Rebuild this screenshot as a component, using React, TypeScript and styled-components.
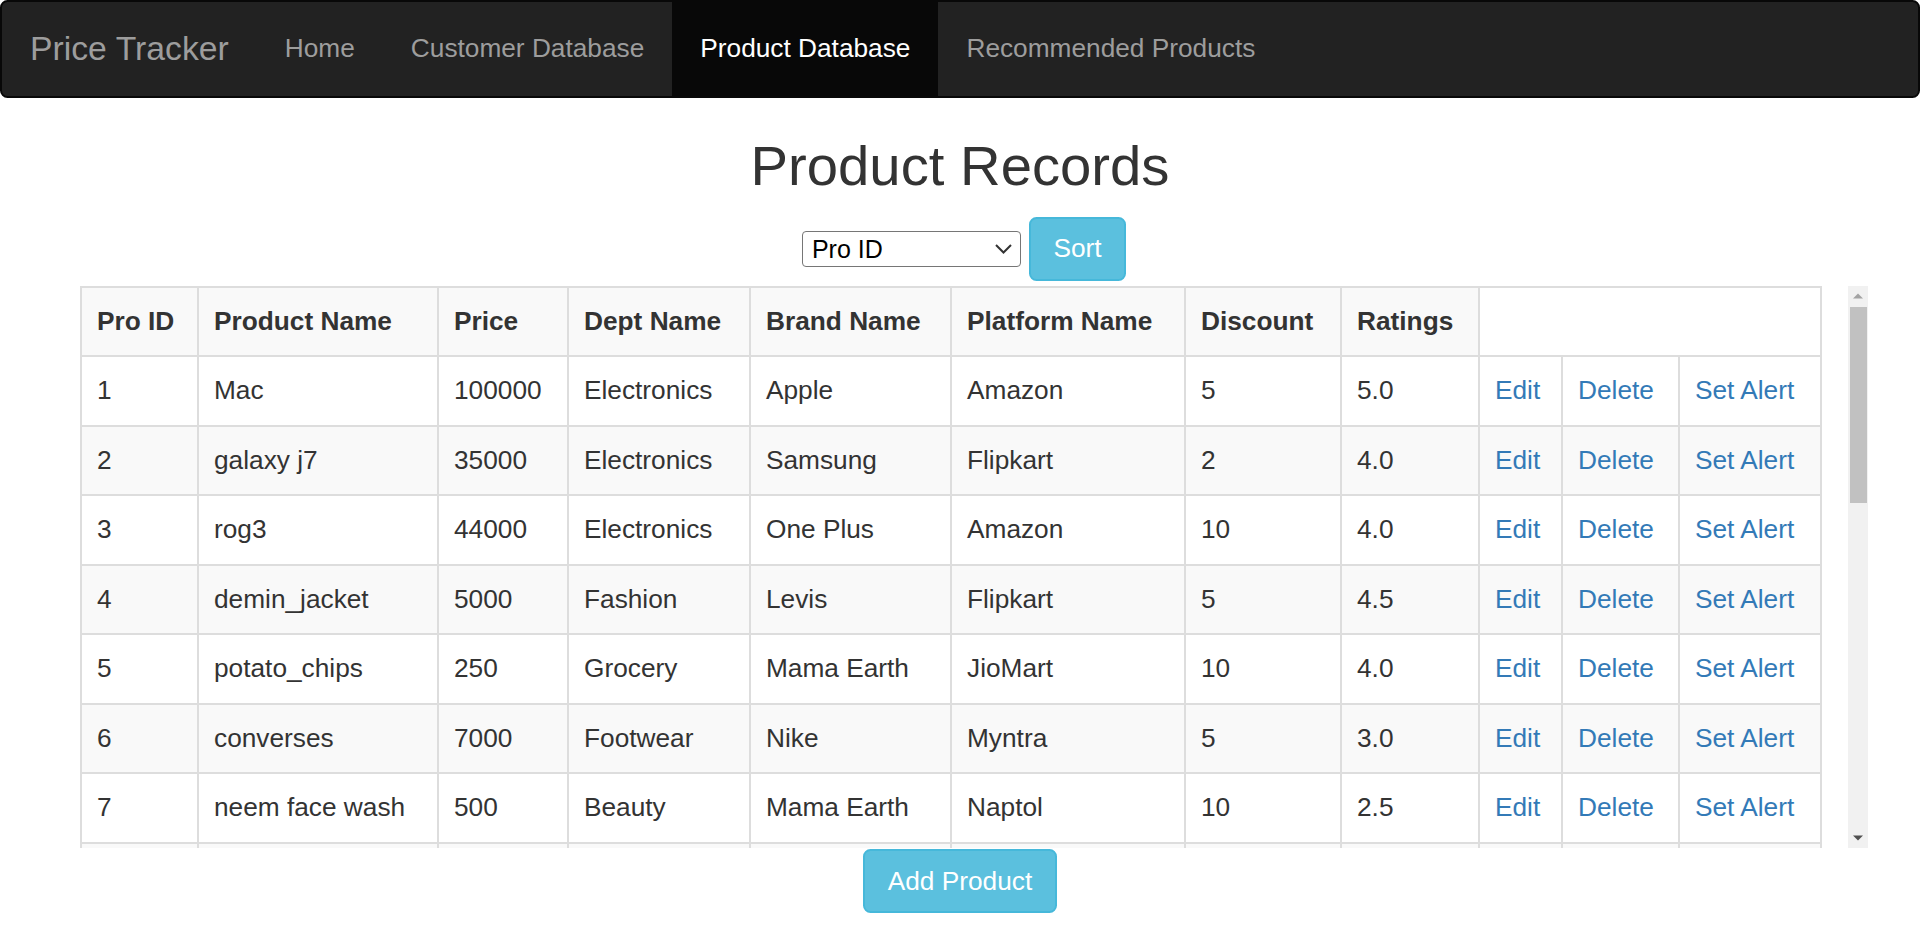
import React from "react";
import styled, { createGlobalStyle } from "styled-components";

const GlobalStyle = createGlobalStyle`
  html, body { margin: 0; padding: 0; background: #fff; }
  body {
    font-family: "Liberation Sans", Arial, Helvetica, sans-serif;
    font-size: 26.25px;
    line-height: 37.5px;
    color: #333;
  }
  *, *::before, *::after { box-sizing: border-box; }
`;

const Navbar = styled.nav`
  display: flex;
  align-items: stretch;
  height: 97.5px;
  background: #222;
  border: 2px solid #080808;
  border-radius: 7.5px;
`;

const Brand = styled.a`
  display: flex;
  align-items: center;
  padding: 0 28px;
  font-size: 33.75px;
  line-height: 37.5px;
  color: #9d9d9d;
  text-decoration: none;
`;

const NavList = styled.ul`
  display: flex;
  margin: 0;
  padding: 0;
  list-style: none;
`;

const NavItem = styled.li`
  display: flex;
`;

const NavLink = styled.a<{ $active?: boolean }>`
  display: flex;
  align-items: center;
  padding: 0 28px;
  font-size: 26.25px;
  color: ${(p) => (p.$active ? "#fff" : "#9d9d9d")};
  background: ${(p) => (p.$active ? "#080808" : "transparent")};
  text-decoration: none;
`;

const Main = styled.main`
  padding: 0 52px;
`;

const Heading = styled.h2`
  margin: 37.5px 0 0;
  font-size: 56.25px;
  font-weight: 500;
  line-height: 61.875px;
  text-align: center;
  color: #333;
`;

const Controls = styled.div`
  display: flex;
  justify-content: center;
  align-items: center;
  gap: 8px;
  margin: 20px 0 5px;
  padding-left: 8px;
`;

const SelectWrap = styled.div`
  position: relative;
  width: 219px;
  height: 36px;
`;

const Select = styled.select`
  appearance: none;
  -webkit-appearance: none;
  width: 100%;
  height: 100%;
  padding: 0 30px 0 9px;
  font-family: "Liberation Sans", Arial, sans-serif;
  font-size: 25px;
  color: #000;
  background: #fff;
  border: 1px solid #767676;
  border-radius: 4px;
`;

const Chevron = styled.svg`
  position: absolute;
  right: 9px;
  top: 13px;
  pointer-events: none;
`;

const Button = styled.button`
  display: inline-block;
  padding: 11.25px 22.5px;
  font-family: "Liberation Sans", Arial, sans-serif;
  font-size: 26.25px;
  line-height: 37.5px;
  color: #fff;
  background: #5bc0de;
  border: 2px solid #46b8da;
  border-radius: 7.5px;
  cursor: pointer;
`;

const ScrollArea = styled.div`
  display: flex;
  height: 562.5px;
`;

const Viewport = styled.div`
  flex: 1;
  min-width: 0;
  overflow-y: auto;
  padding: 0 28px;
  scrollbar-width: none;
  &::-webkit-scrollbar {
    display: none;
  }
`;

const ScrollBar = styled.div`
  display: flex;
  flex-direction: column;
  width: 20px;
  flex: none;
  background: #f1f1f1;
`;

const ScrollButton = styled.div`
  display: flex;
  align-items: center;
  justify-content: center;
  height: 21px;
  flex: none;
`;

const Thumb = styled.div`
  height: 196px;
  margin: 0 1px 0 2px;
  background: #c1c1c1;
  flex: none;
`;

const Spacer = styled.div`
  flex: 1;
`;

const Table = styled.table`
  width: 100%;
  table-layout: fixed;
  border-collapse: collapse;
  border: 2px solid #ddd;
`;

const Row = styled.tr<{ $striped?: boolean }>`
  background: ${(p) => (p.$striped ? "#f9f9f9" : "transparent")};
`;

const HeadCell = styled.th<{ $blank?: boolean }>`
  padding: 15px;
  border: 2px solid #ddd;
  text-align: left;
  vertical-align: bottom;
  font-weight: bold;
  line-height: 37.5px;
  white-space: nowrap;
  background: ${(p) => (p.$blank ? "#fff" : "transparent")};
`;

const Cell = styled.td`
  padding: 15px;
  border: 2px solid #ddd;
  vertical-align: top;
  line-height: 37.5px;
  white-space: nowrap;
  overflow: hidden;
`;

const ActionLink = styled.a`
  color: #337ab7;
  text-decoration: none;
  cursor: pointer;
`;

const Footer = styled.div`
  display: flex;
  justify-content: center;
  margin-top: 1px;
`;

const colWidths = [117, 240, 130, 182, 201, 234, 156, 138, 83, 117, 142];

const headers = [
  "Pro ID",
  "Product Name",
  "Price",
  "Dept Name",
  "Brand Name",
  "Platform Name",
  "Discount",
  "Ratings",
];

type Product = [number, string, number, string, string, string, number, string];

const products: Product[] = [
  [1, "Mac", 100000, "Electronics", "Apple", "Amazon", 5, "5.0"],
  [2, "galaxy j7", 35000, "Electronics", "Samsung", "Flipkart", 2, "4.0"],
  [3, "rog3", 44000, "Electronics", "One Plus", "Amazon", 10, "4.0"],
  [4, "demin_jacket", 5000, "Fashion", "Levis", "Flipkart", 5, "4.5"],
  [5, "potato_chips", 250, "Grocery", "Mama Earth", "JioMart", 10, "4.0"],
  [6, "converses", 7000, "Footwear", "Nike", "Myntra", 5, "3.0"],
  [7, "neem face wash", 500, "Beauty", "Mama Earth", "Naptol", 10, "2.5"],
  [8, "ipad air", 55000, "Electronics", "Apple", "Flipkart", 8, "4.5"],
  [9, "running shoes", 3500, "Footwear", "Adidas", "Amazon", 15, "4.0"],
  [10, "denim jeans", 2500, "Fashion", "Levis", "Myntra", 20, "3.5"],
  [11, "face cream", 400, "Beauty", "Lakme", "Naptol", 5, "4.0"],
  [12, "basmati rice", 900, "Grocery", "India Gate", "JioMart", 10, "4.5"],
  [13, "earbuds", 2000, "Electronics", "boAt", "Amazon", 25, "4.0"],
  [14, "t-shirt", 800, "Fashion", "Puma", "Flipkart", 30, "3.5"],
  [15, "sandals", 1200, "Footwear", "Bata", "Myntra", 10, "3.0"],
  [16, "shampoo", 350, "Beauty", "Dove", "Amazon", 5, "4.0"],
  [17, "smart watch", 4500, "Electronics", "Noise", "Flipkart", 12, "4.0"],
  [18, "green tea", 300, "Grocery", "Tetley", "JioMart", 5, "4.5"],
  [19, "hoodie", 1500, "Fashion", "H&M", "Myntra", 10, "4.0"],
  [20, "laptop bag", 1800, "Electronics", "Skybags", "Amazon", 15, "3.5"],
];

export default function App() {
  return (
    <>
      <GlobalStyle />
      <Navbar>
        <Brand href="#">Price Tracker</Brand>
        <NavList>
          <NavItem>
            <NavLink href="#">Home</NavLink>
          </NavItem>
          <NavItem>
            <NavLink href="#">Customer Database</NavLink>
          </NavItem>
          <NavItem>
            <NavLink href="#" $active>
              Product Database
            </NavLink>
          </NavItem>
          <NavItem>
            <NavLink href="#">Recommended Products</NavLink>
          </NavItem>
        </NavList>
      </Navbar>
      <Main>
        <Heading>Product Records</Heading>
        <Controls>
          <SelectWrap>
            <Select defaultValue="proid">
              <option value="proid">Pro ID</option>
              <option value="name">Product Name</option>
              <option value="price">Price</option>
              <option value="discount">Discount</option>
              <option value="ratings">Ratings</option>
            </Select>
            <Chevron width="17" height="10" viewBox="0 0 17 10">
              <path d="M1 1 L8.5 8.5 L16 1" fill="none" stroke="#333" strokeWidth="2" />
            </Chevron>
          </SelectWrap>
          <Button>Sort</Button>
        </Controls>
        <ScrollArea>
          <Viewport>
            <Table>
              <colgroup>
                {colWidths.map((w, i) => (
                  <col key={i} style={{ width: w }} />
                ))}
              </colgroup>
              <tbody>
                <Row $striped>
                  {headers.map((h) => (
                    <HeadCell key={h}>{h}</HeadCell>
                  ))}
                  <HeadCell $blank colSpan={3} />
                </Row>
                {products.map((p, idx) => (
                  <Row key={p[0]} $striped={idx % 2 === 1}>
                    {p.map((v, i) => (
                      <Cell key={i}>{v}</Cell>
                    ))}
                    <Cell>
                      <ActionLink>Edit</ActionLink>
                    </Cell>
                    <Cell>
                      <ActionLink>Delete</ActionLink>
                    </Cell>
                    <Cell>
                      <ActionLink>Set Alert</ActionLink>
                    </Cell>
                  </Row>
                ))}
              </tbody>
            </Table>
          </Viewport>
          <ScrollBar aria-hidden="true">
            <ScrollButton>
              <svg width="10" height="6" viewBox="0 0 10 6">
                <polygon points="0,5.5 5,0.5 10,5.5" fill="#a3a3a3" />
              </svg>
            </ScrollButton>
            <Thumb />
            <Spacer />
            <ScrollButton>
              <svg width="10" height="6" viewBox="0 0 10 6">
                <polygon points="0,0.5 10,0.5 5,5.5" fill="#505050" />
              </svg>
            </ScrollButton>
          </ScrollBar>
        </ScrollArea>
        <Footer>
          <Button>Add Product</Button>
        </Footer>
      </Main>
    </>
  );
}
